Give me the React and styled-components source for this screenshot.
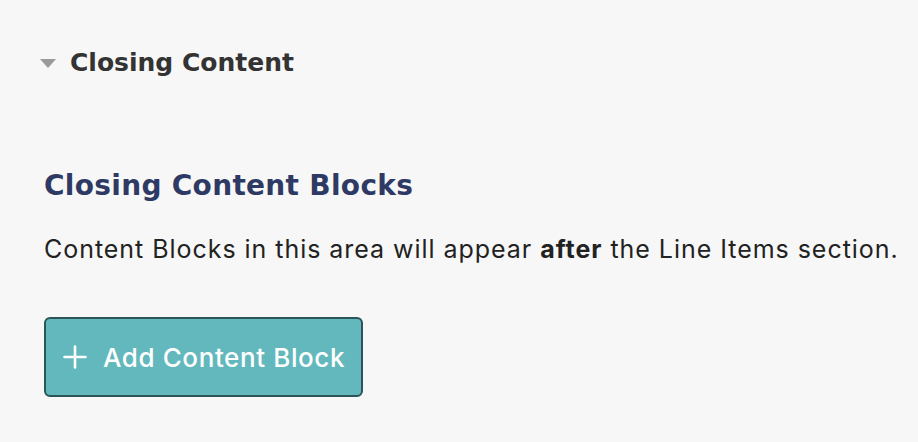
import React from "react";
import styled, { createGlobalStyle } from "styled-components";

const Global = createGlobalStyle`
  html, body { margin: 0; padding: 0; background: #f7f7f7; }
  body { font-family: Inter, "Noto Sans", sans-serif; }
`;

const Page = styled.div`
  width: 918px;
  height: 442px;
  box-sizing: border-box;
  padding: 46px 0 0 40px;
  background: #f7f7f7;
  display: flex;
  flex-direction: column;
`;

const Toggle = styled.div`
  display: flex;
  align-items: center;
  gap: 14px;
  height: 34px;
`;

const Caret = styled.span`
  width: 0;
  height: 0;
  border-left: 8px solid transparent;
  border-right: 8px solid transparent;
  border-top: 9px solid #9a9a9a;
`;

const ToggleTitle = styled.h2`
  margin: 0;
  font-family: "DejaVu Sans", Verdana, sans-serif;
  font-weight: bold;
  font-size: 25px;
  line-height: 34px;
  color: #333;
`;

const Section = styled.section`
  padding: 89px 0 0 4px;
  display: flex;
  flex-direction: column;
  align-items: flex-start;
`;

const Heading = styled.h3`
  margin: 0;
  font-family: "DejaVu Sans", Verdana, sans-serif;
  font-weight: bold;
  font-size: 28px;
  line-height: 34px;
  letter-spacing: 0.3px;
  color: #2e3a63;
`;

const Text = styled.p`
  margin: 31px 0 0;
  font-family: Inter, sans-serif;
  font-size: 25px;
  line-height: 30px;
  letter-spacing: 0.96px;
  color: #222;
  b { font-weight: 700; }
`;

const Button = styled.button`
  margin-top: 53px;
  width: 319px;
  height: 80px;
  box-sizing: border-box;
  border: 2px solid #2b5556;
  border-radius: 6px;
  background: #63b8bd;
  color: #fff;
  font-family: Inter, sans-serif;
  font-size: 26px;
  font-weight: 500;
  letter-spacing: 0.6px;
  display: flex;
  align-items: center;
  gap: 16px;
  padding: 0 0 0 17px;
`;

export default function App() {
  return (
    <>
      <Global />
      <Page>
        <Toggle>
          <Caret />
          <ToggleTitle>Closing Content</ToggleTitle>
        </Toggle>
        <Section>
          <Heading>Closing Content Blocks</Heading>
          <Text>
            Content Blocks in this area will appear <b>after</b> the Line Items section.
          </Text>
          <Button>
            <svg width="24" height="24" viewBox="0 0 24 24">
              <path d="M12 1.5v21M1.5 12h21" stroke="#fff" strokeWidth="2.6" strokeLinecap="round" />
            </svg>
            Add Content Block
          </Button>
        </Section>
      </Page>
    </>
  );
}
